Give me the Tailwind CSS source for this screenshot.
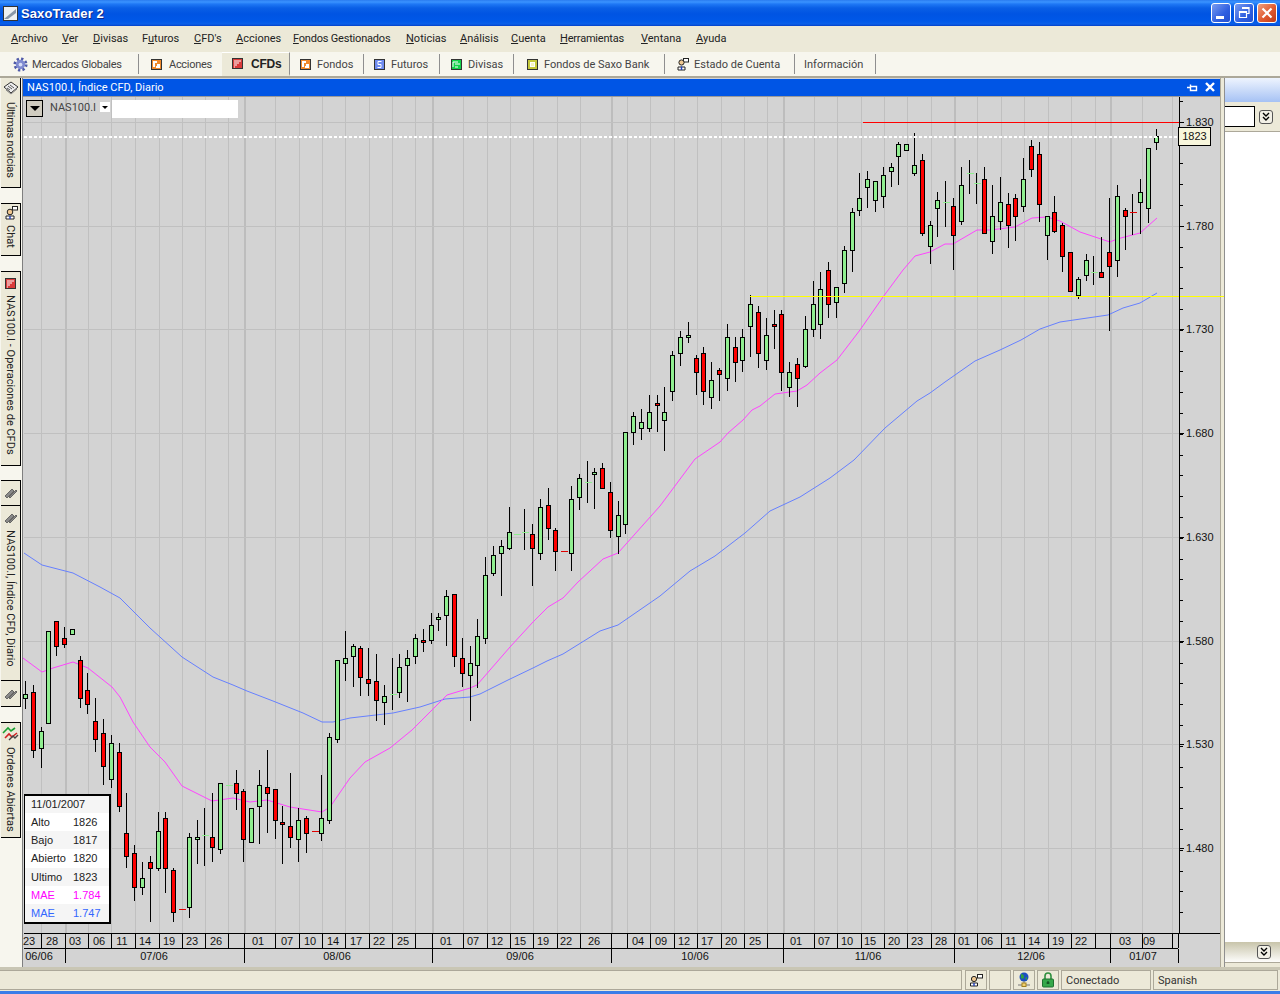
<!DOCTYPE html>
<html lang="es">
<head>
<meta charset="UTF-8">
<title>SaxoTrader 2</title>
<script src="https://cdn.jsdelivr.net/npm/@tailwindcss/browser@4"></script>
</head>
<body class="w-[1280px] h-[994px] overflow-hidden flex flex-col bg-[#ece9d8] font-['Roboto',sans-serif] text-[11px] leading-none text-[#222]">

<!-- title bar -->
<div class="h-[26px] shrink-0 flex items-center bg-[linear-gradient(180deg,#2a7cf0_0px,#3a93ff_2px,#1f78f5_4px,#0a5fe6_8px,#0054e3_14px,#0058e8_21px,#0a5fe8_24px,#0340c8_26px)]">
  <svg class="ml-[3px] w-[15px] h-[15px]" viewBox="0 0 15 15"><rect x=".5" y=".5" width="14" height="14" fill="#eef0f2" stroke="#333"/><path d="M1 13 L13 3 V7 L5 13Z" fill="#8a97a8"/></svg>
  <span class="ml-[3px] font-['Liberation_Sans',sans-serif] font-bold text-[13px] tracking-[.1px] text-white [text-shadow:1px_1px_0_#0f2a89]">SaxoTrader 2</span>
  <div class="ml-auto mr-[3px] flex gap-[3px]">
    <div class="w-[20px] h-[20px] rounded-[3px] border border-white bg-[linear-gradient(135deg,#7a9cf0,#2f5fe0_60%,#2450d0)] flex items-end justify-center pb-[3px]"><div class="w-[8px] h-[3px] bg-white mr-[2px]"></div></div>
    <div class="w-[20px] h-[20px] rounded-[3px] border border-white bg-[linear-gradient(135deg,#7a9cf0,#2f5fe0_60%,#2450d0)]"><svg viewBox="0 0 18 18" class="w-[18px] h-[18px]"><path d="M7 3.5h7v6h-2M4.5 7.5h7v6h-7z" fill="none" stroke="#fff" stroke-width="1.2"/><path d="M7 4h7M4.5 8h7" stroke="#fff" stroke-width="2"/></svg></div>
    <div class="w-[20px] h-[20px] rounded-[3px] border border-white bg-[linear-gradient(135deg,#f0a080,#e05a30_55%,#c03a18)]"><svg viewBox="0 0 18 18" class="w-[18px] h-[18px]"><path d="M4.5 4.5 13.5 13.5M13.5 4.5 4.5 13.5" stroke="#fff" stroke-width="2.2"/></svg></div>
  </div>
</div>

<!-- menu -->
<div class="h-[26px] shrink-0 flex items-center pl-[11px] pb-[2px] bg-[#ece9d8] text-[11px]">
  <span class="w-[51px]"><u>A</u>rchivo</span>
  <span class="w-[31px]"><u>V</u>er</span>
  <span class="w-[49px]"><u>D</u>ivisas</span>
  <span class="w-[52px]">F<u>u</u>turos</span>
  <span class="w-[42px]"><u>C</u>FD's</span>
  <span class="w-[57px]"><u>A</u>cciones</span>
  <span class="w-[113px] tracking-[-.2px]"><u>F</u>ondos Gestionados</span>
  <span class="w-[54px]"><u>N</u>oticias</span>
  <span class="w-[51px]"><u>A</u>nálisis</span>
  <span class="w-[49px]"><u>C</u>uenta</span>
  <span class="w-[81px] tracking-[-.2px]"><u>H</u>erramientas</span>
  <span class="w-[55px]"><u>V</u>entana</span>
  <span><u>A</u>yuda</span>
</div>

<!-- toolbar tabs -->
<div class="h-[24px] shrink-0 flex items-center bg-[#f7f6ee] text-[#444]">
  <div class="w-[138px] pl-[13px] flex items-center gap-[4px]">
    <svg class="w-[15px] h-[15px]" viewBox="0 0 16 16"><circle cx="8" cy="8" r="6" fill="none" stroke="#4f5aa8" stroke-width="3" stroke-dasharray="2.4 2.3"/><circle cx="8" cy="8" r="5" fill="#7f8ad0"/><circle cx="8" cy="8" r="2" fill="#d8ddf5"/></svg>
    <span class="tracking-[-.28px]">Mercados Globales</span>
  </div>
  <div class="w-px h-[20px] bg-[#8f8f8f]"></div>
  <div class="w-[83px] pl-[12px] flex items-center gap-[7px]">
    <svg class="w-[11px] h-[11px]" viewBox="0 0 11 11"><rect x=".5" y=".5" width="10" height="10" fill="#f08a2c" stroke="#333"/><path d="M2 2h4v2H4v4H2zM6 5h3v4H5V7h1z" fill="#fff"/></svg>
    <span class="tracking-[-.3px]">Acciones</span>
  </div>
  <div class="w-[68px] h-[24px] pl-[10px] flex items-center gap-[8px] bg-[#ece9d8] border-t border-t-white border-r border-r-[#8f8f8f] border-b-2 border-b-[#ece9d8]">
    <svg class="w-[11px] h-[11px]" viewBox="0 0 11 11"><rect x=".5" y=".5" width="10" height="10" fill="#d93a3a" stroke="#333"/><path d="M2 3h7M2 5h5M2 7h3M2 9h1" stroke="#fff" fill="none"/></svg>
    <span class="font-['Liberation_Sans',sans-serif] font-bold text-[12px] tracking-[-.2px] text-[#222]">CFDs</span>
  </div>
  <div class="w-[73px] pl-[10px] flex items-center gap-[6px]">
    <svg class="w-[11px] h-[11px]" viewBox="0 0 11 11"><rect x=".5" y=".5" width="10" height="10" fill="#f08a2c" stroke="#333"/><path d="M2 2h4v2H4v4H2zM6 5h3v4H5V7h1z" fill="#fff"/></svg>
    <span>Fondos</span>
  </div>
  <div class="w-px h-[20px] bg-[#8f8f8f]"></div>
  <div class="w-[75px] pl-[10px] flex items-center gap-[6px]">
    <svg class="w-[11px] h-[11px]" viewBox="0 0 11 11"><rect x=".5" y=".5" width="10" height="10" fill="#6f8cf0" stroke="#333"/><path d="M7.5 2.5H4v3h3v3H3.5" stroke="#fff" fill="none"/></svg>
    <span>Futuros</span>
  </div>
  <div class="w-px h-[20px] bg-[#8f8f8f]"></div>
  <div class="w-[73px] pl-[11px] flex items-center gap-[6px]">
    <svg class="w-[11px] h-[11px]" viewBox="0 0 11 11"><rect x=".5" y=".5" width="10" height="10" fill="#12d24a" stroke="#333"/><path d="M2 3h5M2 3v5M4 5h5M4 8h3" stroke="#fff" fill="none"/></svg>
    <span>Divisas</span>
  </div>
  <div class="w-px h-[20px] bg-[#8f8f8f]"></div>
  <div class="w-[150px] pl-[13px] flex items-center gap-[6px]">
    <svg class="w-[11px] h-[11px]" viewBox="0 0 11 11"><rect x=".5" y=".5" width="10" height="10" fill="#c5c93c" stroke="#333"/><rect x="3.5" y="3.5" width="4" height="4" fill="#f7f7c0" stroke="#fff"/></svg>
    <span>Fondos de Saxo Bank</span>
  </div>
  <div class="w-px h-[20px] bg-[#8f8f8f]"></div>
  <div class="w-[129px] pl-[12px] flex items-center gap-[5px]">
    <svg class="w-[12px] h-[13px]" viewBox="0 0 12 13"><rect x="6.5" y=".5" width="5" height="3.5" fill="#fff" stroke="#222"/><circle cx="4.5" cy="4.5" r="2.6" fill="#f0c890" stroke="#222"/><path d="M1 12V9h7v3z" fill="#fff" stroke="#222"/><path d="M4.5 8.5V12" stroke="#2040c0" stroke-width="1.4"/></svg>
    <span>Estado de Cuenta</span>
  </div>
  <div class="w-px h-[20px] bg-[#8f8f8f]"></div>
  <div class="w-[80px] pl-[9px]">Información</div>
  <div class="w-px h-[20px] bg-[#8f8f8f]"></div>
</div>
<div class="h-[2px] shrink-0 bg-[#aca899]"></div>

<!-- body -->
<div class="h-[889px] shrink-0 flex">

  <!-- left dock tabs -->
  <div class="w-[23px] shrink-0 bg-[#f7f6ee] flex flex-col pl-px pr-px border-r border-r-[#7f7f7f]">
    <div class="h-[110px] bg-[#ece9d8] border-r border-b border-black flex flex-col items-center pt-[2px]">
      <svg class="w-[16px] h-[16px] shrink-0" viewBox="0 0 16 16"><path d="M1 7 8 2l7 5-7 6z" fill="#eee" stroke="#333"/><path d="M5 6l4 3M7 5l4 3M4 8l3 2" stroke="#555"/><path d="M3 10l5 4 6-5" fill="none" stroke="#888"/></svg>
      <span class="mt-[6px] tracking-[-.2px] [writing-mode:vertical-rl]">Últimas noticias</span>
    </div>
    <div class="h-[53px] mt-[15px] bg-[#ece9d8] border-t border-r border-b border-black flex flex-col items-center pt-[2px]">
      <svg class="w-[14px] h-[14px] shrink-0" viewBox="0 0 14 14"><rect x="8.5" y=".5" width="5" height="3.5" fill="#fff" stroke="#222"/><circle cx="6" cy="6" r="2.8" fill="#f0c890" stroke="#222"/><path d="M2 13v-3h8v3z" fill="#fff" stroke="#222"/><path d="M6 10v3" stroke="#2040c0" stroke-width="1.4"/></svg>
      <span class="mt-[5px] [writing-mode:vertical-rl]">Chat</span>
    </div>
    <div class="h-[195px] mt-[15px] bg-[#ece9d8] border-t border-r border-b border-black flex flex-col items-center pt-[6px]">
      <svg class="w-[11px] h-[11px] shrink-0" viewBox="0 0 11 11"><rect x=".5" y=".5" width="10" height="10" fill="#d93a3a" stroke="#333"/><path d="M2 3h7M2 5h5M2 7h3M2 9h1" stroke="#fff" fill="none"/></svg>
      <span class="mt-[6px] [writing-mode:vertical-rl]">NAS100.I - Operaciones de CFDs</span>
    </div>
    <div class="h-[26px] mt-[14px] bg-[#ece9d8] border-t border-r border-b border-black flex items-center justify-center">
      <svg class="w-[14px] h-[12px]" viewBox="0 0 14 12"><path d="M1 9 8 2l2 2-7 7zM5 10l7-7 1 1-7 7z" fill="#8a8a8a" stroke="#444" stroke-width=".7"/></svg>
    </div>
    <div class="h-[175px] bg-[#ece9d8] border-r border-b border-black flex flex-col items-center pt-[6px]">
      <svg class="w-[14px] h-[12px] shrink-0" viewBox="0 0 14 12"><path d="M1 9 8 2l2 2-7 7zM5 10l7-7 1 1-7 7z" fill="#8a8a8a" stroke="#444" stroke-width=".7"/></svg>
      <span class="mt-[6px] [writing-mode:vertical-rl]">NAS100.I, Índice CFD, Diario</span>
    </div>
    <div class="h-[26px] bg-[#ece9d8] border-r border-b border-black flex items-center justify-center">
      <svg class="w-[14px] h-[12px]" viewBox="0 0 14 12"><path d="M1 9 8 2l2 2-7 7zM5 10l7-7 1 1-7 7z" fill="#8a8a8a" stroke="#444" stroke-width=".7"/></svg>
    </div>
    <div class="h-[116px] mt-[15px] bg-[#ece9d8] border-t border-r border-b border-black flex flex-col items-center pt-[3px]">
      <svg class="w-[17px] h-[16px] shrink-0" viewBox="0 0 17 16"><path d="M1 7 6 2l3 3 4-3" fill="none" stroke="#18a030" stroke-width="1.6"/><path d="M3 12l4-4 3 3 5-4" fill="none" stroke="#d02020" stroke-width="1.6"/><path d="M7 14l4-4 2 2 3-3" fill="none" stroke="#444" stroke-width="1.4"/></svg>
      <span class="mt-[5px] [writing-mode:vertical-rl]">Ordenes Abiertas</span>
    </div>
  </div>

  <!-- chart window -->
  <div class="w-[1197px] shrink-0 flex flex-col bg-[#d3d3d3]">
    <div class="h-[17px] mt-px shrink-0 bg-[#0055e5] text-white flex items-center pl-[4px] pr-[4px] pb-px">
      <span>NAS100.I, Índice CFD, Diario</span>
      <svg class="ml-auto w-[11px] h-[9px]" viewBox="0 0 11 9"><path d="M0 4.5h3M3.5 1.5v6h6v-4h-6" fill="none" stroke="#fff" stroke-width="1.4"/></svg>
      <svg class="ml-[7px] mr-[1px] w-[10px] h-[10px]" viewBox="0 0 10 10"><path d="M1 1 9 9M9 1 1 9" stroke="#fff" stroke-width="2.4"/></svg>
    </div>
    <div class="h-px shrink-0 bg-[#9a9a9a]"></div>
    <div class="relative flex-1">
      <svg id="chart" class="absolute inset-0 overflow-visible font-['Liberation_Sans',sans-serif]" width="1197" height="870" viewBox="23 97 1197 870"></svg>

      <!-- instrument picker -->
      <div class="absolute left-[3px] top-[3px] w-[17px] h-[17px] bg-[#d0ccc0] border border-black flex items-center justify-center">
        <div class="w-0 h-0 border-l-[5px] border-r-[5px] border-t-[5px] border-l-transparent border-r-transparent border-t-black"></div>
      </div>
      <span class="absolute left-[27px] top-[5px] text-[#444]">NAS100.I</span>
      <div class="absolute left-[77px] top-[5px] w-[10px] h-[10px] bg-white flex items-center justify-center">
        <div class="w-0 h-0 border-l-[3px] border-r-[3px] border-t-[3px] border-l-transparent border-r-transparent border-t-black"></div>
      </div>
      <div class="absolute left-[89px] top-[3px] w-[126px] h-[18px] bg-white"></div>

      <!-- crosshair data box -->
      <div class="absolute left-[1px] top-[697px] w-[87px] border-2 border-l border-black font-['Liberation_Sans',sans-serif] text-[11px]">
        <div class="h-[17px] pl-[6px] flex items-center bg-[#f5f5f5]">11/01/2007</div>
        <div class="h-[18px] pl-[6px] flex items-center bg-white"><span class="w-[42px]">Alto</span>1826</div>
        <div class="h-[18px] pl-[6px] flex items-center bg-[#f5f5f5]"><span class="w-[42px]">Bajo</span>1817</div>
        <div class="h-[19px] pl-[6px] flex items-center bg-white"><span class="w-[42px]">Abierto</span>1820</div>
        <div class="h-[18px] pl-[6px] flex items-center bg-[#f5f5f5]"><span class="w-[42px]">Ultimo</span>1823</div>
        <div class="h-[18px] pl-[6px] flex items-center bg-white text-[#ff00ff]"><span class="w-[42px]">MAE</span>1.784</div>
        <div class="h-[18px] pl-[6px] flex items-center bg-[#f5f5f5] text-[#3366ff]"><span class="w-[42px]">MAE</span>1.747</div>
      </div>
    </div>
  </div>

  <!-- splitter -->
  <div class="w-[4px] shrink-0 bg-[#ece9d8] border-l border-[#aca899]"></div>

  <!-- right panel -->
  <div class="flex-1 flex flex-col border-l border-[#8f8f8f]">
    <div class="h-[24px] shrink-0 bg-[linear-gradient(180deg,#eef4fe,#a6c2f4)]"></div>
    <div class="h-[29px] shrink-0 bg-[#ece9d8] flex items-center">
      <div class="w-[30px] h-[21px] bg-white border border-l-0 border-black"></div>
      <div class="ml-[4px] w-[14px] h-[14px] rounded-[3px] bg-[#f2f0e6] border border-[#555] flex items-center justify-center">
        <svg class="w-[10px] h-[10px]" viewBox="0 0 10 10"><path d="M2 1l3 3 3-3M2 5l3 3 3-3" fill="none" stroke="#000" stroke-width="1.4"/></svg>
      </div>
    </div>
    <div class="flex-1 bg-white border-t border-[#aca899]"></div>
    <div class="h-[20px] shrink-0 bg-[linear-gradient(180deg,#c8c4aa,#fdfdfb)] flex items-center justify-end pr-[9px]">
      <div class="w-[14px] h-[14px] rounded-[3px] bg-[#f2f0e6] border border-[#555] flex items-center justify-center">
        <svg class="w-[10px] h-[10px]" viewBox="0 0 10 10"><path d="M2 1l3 3 3-3M2 5l3 3 3-3" fill="none" stroke="#000" stroke-width="1.4"/></svg>
      </div>
    </div>
    <div class="h-[5px] shrink-0 bg-[#ece9d8] border-t border-[#aca899]"></div>
  </div>
</div>

<!-- status bar -->
<div class="h-[3px] shrink-0 bg-[#c9c6b4]"></div>
<div class="h-[20px] shrink-0 flex gap-[2px] bg-[#ece9d8] text-[#333]">
  <div class="w-[962px] border border-[#aca899] border-l-0"></div>
  <div class="w-[22px] ml-[1px] border border-[#aca899] flex items-center justify-center">
    <svg class="w-[14px] h-[13px]" viewBox="0 0 14 13"><rect x="8.5" y=".5" width="5" height="3.5" fill="#fff" stroke="#222"/><circle cx="5" cy="5" r="2.6" fill="#f0c890" stroke="#222"/><path d="M1.5 12V9h7v3z" fill="#fff" stroke="#222"/><path d="M5 9v3" stroke="#2040c0" stroke-width="1.4"/></svg>
  </div>
  <div class="w-[22px] border border-[#aca899]"></div>
  <div class="w-[22px] border border-[#aca899] flex items-center justify-center">
    <svg class="w-[14px] h-[16px]" viewBox="0 0 14 16"><circle cx="7" cy="5" r="4.5" fill="#1c4fc0"/><path d="M4 2c2 0 3 1 3 3s-2 2-3 1zM8 6l2-1v3z" fill="#2ea040"/><path d="M7 9v3M1 13h12" stroke="#777"/><rect x="5" y="11" width="4" height="3.5" fill="#f0d070" stroke="#a08020"/></svg>
  </div>
  <div class="w-[22px] border border-[#aca899] flex items-center justify-center">
    <svg class="w-[14px] h-[16px]" viewBox="0 0 14 16"><path d="M4 7V4a3 3 0 0 1 6 0v3" fill="none" stroke="#2f8f3f" stroke-width="1.6"/><rect x="1.5" y="7" width="11" height="8" rx="1" fill="#35a84a" stroke="#1f7030"/><path d="M7 9v3M5.5 11h3" stroke="#0d3d18"/></svg>
  </div>
  <div class="w-[90px] border border-[#aca899] flex items-center pl-[4px]">Conectado</div>
  <div class="w-[125px] border border-[#aca899] flex items-center pl-[4px]">Spanish</div>
</div>
<div class="h-px shrink-0 bg-[#ece9d8]"></div>
<div class="flex-1 bg-[#3a7de8]"></div>

<script>
// x, wick top, body top, body bottom, wick bottom, colour. g/r = body, d/e = green/red doji dash
var candles = [
[25,681,694,698,708,'g'],[33,685,692,750,757,'r'],[41,727,731,748,767,'g'],[48,631,631,723,723,'g'],[56,621,621,646,655,'r'],[64,627,638,644,647,'r'],[72,629,629,634,634,'g'],[80,656,660,698,707,'r'],[87,673,690,704,713,'r'],[95,698,721,739,751,'r'],[103,719,733,766,784,'r'],[111,735,743,779,787,'g'],[119,743,752,806,811,'r'],[126,793,833,856,867,'r'],[134,845,853,887,900,'r'],[142,862,878,887,894,'g'],[150,856,862,868,921,'r'],[158,812,831,868,870,'g'],[165,812,818,868,892,'r'],[173,868,870,912,921,'r'],[181,909,909,909,909,'e'],[189,833,837,907,917,'g'],[197,820,837,839,863,'g'],[204,808,835,835,865,'d'],[212,793,837,847,861,'r'],[220,783,783,849,853,'g'],[228,785,785,785,785,'d'],[236,770,783,793,809,'r'],[243,789,791,839,861,'r'],[251,808,808,842,842,'g'],[259,770,785,806,843,'g'],[267,750,787,793,832,'r'],[275,789,789,820,838,'r'],[282,806,822,824,863,'r'],[290,773,826,837,847,'r'],[298,808,820,839,861,'g'],[306,816,818,833,852,'r'],[314,831,831,831,831,'e'],[321,775,818,833,840,'g'],[329,733,737,820,823,'g'],[337,660,660,739,742,'g'],[345,631,658,663,680,'g'],
[353,644,646,656,686,'g'],[360,646,648,677,695,'r'],[368,648,679,683,695,'r'],[376,654,681,700,720,'r'],[384,685,696,702,724,'g'],[392,658,694,694,709,'d'],[399,654,667,692,697,'g'],[407,650,658,665,701,'g'],[415,634,638,656,663,'g'],[423,629,640,642,651,'r'],[431,613,625,640,643,'g'],[438,613,617,619,630,'g'],[446,590,596,615,645,'g'],[454,594,594,656,666,'r'],[462,638,658,673,686,'r'],[470,646,663,675,720,'g'],[477,619,636,665,687,'g'],[485,557,575,638,643,'g'],[493,546,555,573,575,'g'],[501,540,546,553,595,'g'],[509,507,532,548,549,'g'],[516,534,534,534,534,'d'],[524,509,532,532,549,'d'],[532,524,534,548,585,'r'],[540,499,507,553,559,'g'],[548,488,505,528,539,'r'],[555,528,530,551,570,'r'],[563,551,551,551,551,'e'],[571,486,499,553,570,'g'],[579,474,478,497,509,'g'],[587,461,482,482,502,'d'],[594,468,472,474,508,'g'],[602,463,468,488,488,'r'],[610,482,492,530,537,'r'],[618,501,515,536,553,'g'],[625,432,432,524,533,'g'],
[633,412,416,432,444,'g'],[641,409,422,428,439,'g'],[649,395,412,428,431,'g'],[657,395,403,405,431,'r'],[664,387,412,420,450,'g'],[672,351,355,391,400,'g'],[680,331,337,353,365,'g'],[688,322,335,337,342,'g'],[696,355,358,372,394,'r'],[703,347,353,391,404,'r'],[711,362,380,397,408,'g'],[719,368,370,374,400,'r'],[727,324,337,378,390,'g'],[735,337,347,362,381,'r'],[742,329,337,360,371,'g'],[750,295,304,326,356,'g'],[758,306,312,353,367,'r'],[766,318,335,360,369,'g'],[774,310,324,326,348,'r'],[781,310,314,372,390,'r'],[789,362,372,387,396,'g'],[797,358,364,378,406,'r'],[805,316,329,366,367,'g'],[813,281,304,329,336,'g'],[820,272,289,324,338,'g'],[828,262,270,304,317,'r'],[836,287,287,302,317,'g'],[844,246,250,283,292,'g'],[852,208,212,250,271,'g'],[859,173,198,210,215,'g'],[867,171,179,187,207,'g'],[875,181,181,200,211,'g'],[883,167,175,196,207,'g'],[891,163,167,171,186,'g'],
[898,142,144,156,184,'g'],[906,144,144,150,150,'g'],[914,133,165,173,175,'g'],[922,154,160,233,235,'r'],[930,221,225,246,263,'g'],[937,192,200,208,236,'g'],[945,181,202,202,226,'d'],[953,198,206,235,269,'r'],[961,167,185,221,224,'g'],[969,160,173,173,193,'d'],[976,173,183,183,203,'d'],[984,167,179,233,233,'r'],[992,185,216,241,253,'g'],[1000,177,202,221,229,'g'],[1008,193,204,225,247,'r'],[1015,194,198,216,240,'r'],[1023,158,179,206,211,'g'],[1031,140,146,169,176,'r'],[1039,142,154,204,221,'r'],[1047,216,216,235,259,'g'],[1054,196,212,231,232,'r'],[1062,223,225,256,271,'r'],[1070,252,252,291,291,'r'],[1078,277,279,295,298,'g'],[1086,254,260,275,280,'g'],[1093,256,272,272,284,'d'],[1101,237,272,277,277,'r'],[1109,198,252,266,330,'r'],[1117,185,196,260,276,'g'],[1125,208,210,216,249,'r'],[1132,194,212,212,234,'e'],[1140,179,192,202,233,'g'],[1148,148,148,208,222,'g'],[1156,129,136,142,149,'g']
];
var blueLine = '24,553 42,565 73,573 100,587 120,598 150,628 182,657 213,677 233,685 247,691 273,701 303,713 322,722 333,722 350,718 393,713 420,707 445,699 470,697 480,694 508,680 533,668 547,661 563,654 600,631 618,625 660,596 690,571 715,556 745,533 770,511 800,497 830,478 854,460 885,428 917,401 930,393 945,382 975,361 1000,350 1021,340 1040,329 1060,322 1108,315 1123,308 1140,303 1157,293';
var pinkLine = '23,658 42,672 53,668 73,662 88,668 112,687 120,697 133,722 150,747 165,762 182,786 212,801 233,798 250,802 267,800 290,807 322,812 330,807 350,778 365,762 390,748 412,730 447,695 470,688 477,685 510,647 533,622 548,607 563,598 578,582 603,559 618,553 660,506 695,459 720,442 728,433 743,420 752,410 760,406 775,394 797,391 807,385 820,373 837,360 860,330 883,297 903,270 915,256 930,252 945,244 953,244 977,230 990,230 1015,227 1032,218 1047,217 1060,221 1080,232 1110,242 1117,239 1140,233 1157,218';
var grid = [41,88,111,135,159,182,205,228,275,299,322,345,369,392,415,463,487,510,533,557,580,627,650,674,697,721,744,767,814,837,861,884,907,931,977,1001,1024,1048,1071,1095,1142,1172];
var months = [65,244,432,611,783,954,1110];
var days = [[29,'23'],[52,'28'],[75,'03'],[99,'06'],[122,'11'],[145,'14'],[169,'19'],[192,'23'],[216,'26'],[258,'01'],[287,'07'],[310,'10'],[333,'14'],[356,'17'],[379,'22'],[403,'25'],[446,'01'],[473,'07'],[497,'12'],[520,'15'],[543,'19'],[566,'22'],[594,'26'],[638,'04'],[661,'09'],[684,'12'],[707,'17'],[731,'20'],[755,'25'],[796,'01'],[824,'07'],[847,'10'],[870,'15'],[894,'20'],[917,'23'],[941,'28'],[964,'01'],[987,'06'],[1011,'11'],[1034,'14'],[1058,'19'],[1081,'22'],[1125,'03'],[1149,'09']];
var monthLabels = [[39,'06/06'],[154,'07/06'],[337,'08/06'],[520,'09/06'],[695,'10/06'],[868,'11/06'],[1031,'12/06'],[1143,'01/07']];
var levels = [[122,'1.830'],[226,'1.780'],[329,'1.730'],[433,'1.680'],[537,'1.630'],[641,'1.580'],[744,'1.530'],[848,'1.480']];

function seg(x1, y1, x2, y2, col, w) {
  return '<line x1="'+x1+'" y1="'+y1+'" x2="'+x2+'" y2="'+y2+'" stroke="'+col+'" stroke-width="'+(w||1)+'" shape-rendering="crispEdges"/>';
}
function label(x, y, txt, anchor) {
  return '<text x="'+x+'" y="'+y+'" font-size="11" fill="#111" text-anchor="'+(anchor||'middle')+'">'+txt+'</text>';
}
var s = '';
grid.forEach(function(x) { s += seg(x+.5, 97, x+.5, 933, '#c0c0c0'); });
months.forEach(function(x) { s += seg(x+.5, 97, x+.5, 933, '#bdbdbd', 2); });
levels.forEach(function(l) { s += seg(24, l[0]+.5, 1179, l[0]+.5, '#c0c0c0'); });

s += '<polyline points="'+blueLine+'" fill="none" stroke="#6680ff"/>';
s += '<polyline points="'+pinkLine+'" fill="none" stroke="#ff44ff"/>';

candles.forEach(function(c) {
  var x = c[0]+.5;
  if (c[5] == 'd' || c[5] == 'e') {
    if (c[1] != c[4]) s += seg(x, c[1], x, c[4]+1, '#000');
    s += seg(x-3, c[2]+.5, x+4, c[2]+.5, c[5] == 'd' ? '#90ee90' : '#e00000');
    return;
  }
  s += seg(x, c[1], x, c[4]+1, '#000');
  s += '<rect x="'+(c[0]-1.5)+'" y="'+(c[2]+.5)+'" width="4" height="'+(c[3]-c[2])+'" fill="'+(c[5] == 'g' ? '#90ee90' : '#ff0000')+'" stroke="#000" shape-rendering="crispEdges"/>';
});

// price levels drawn by hand on the chart
s += seg(863, 122.5, 1183, 122.5, '#ff0000');
s += seg(750, 296.5, 1224, 296.5, '#ffff00');
s += '<line x1="24" y1="137" x2="1178" y2="137" stroke="#fff" stroke-width="2" stroke-dasharray="3 2" shape-rendering="crispEdges"/>';

// price axis
s += seg(1179.5, 97, 1179.5, 933, '#000');
for (var t = 101; t < 933; t += 20.8) s += seg(1180, Math.round(t)+.5, 1183, Math.round(t)+.5, '#000');
levels.forEach(function(l) { s += seg(1180, l[0]+.5, 1184, l[0]+.5, '#000'); s += label(1186, l[0]+4, l[1], 'start'); });
s += '<rect x="1178.5" y="127.5" width="32" height="18" fill="#f8f6dc" stroke="#000" shape-rendering="crispEdges"/>';
s += label(1194.5, 140, '1823');

// date axis
s += seg(24, 933.5, 1220, 933.5, '#000');
s += seg(24, 948.5, 1178, 948.5, '#000');
grid.concat(months, [1178]).forEach(function(x) { s += seg(x+.5, 934, x+.5, 948, '#000'); });
months.concat([1178]).forEach(function(x) { s += seg(x+.5, 949, x+.5, 963, '#000'); });
days.forEach(function(d) { s += label(d[0], 945, d[1]); });
monthLabels.forEach(function(m) { s += label(m[0], 960, m[1]); });
document.getElementById('chart').innerHTML = s;
</script>
</body>
</html>
